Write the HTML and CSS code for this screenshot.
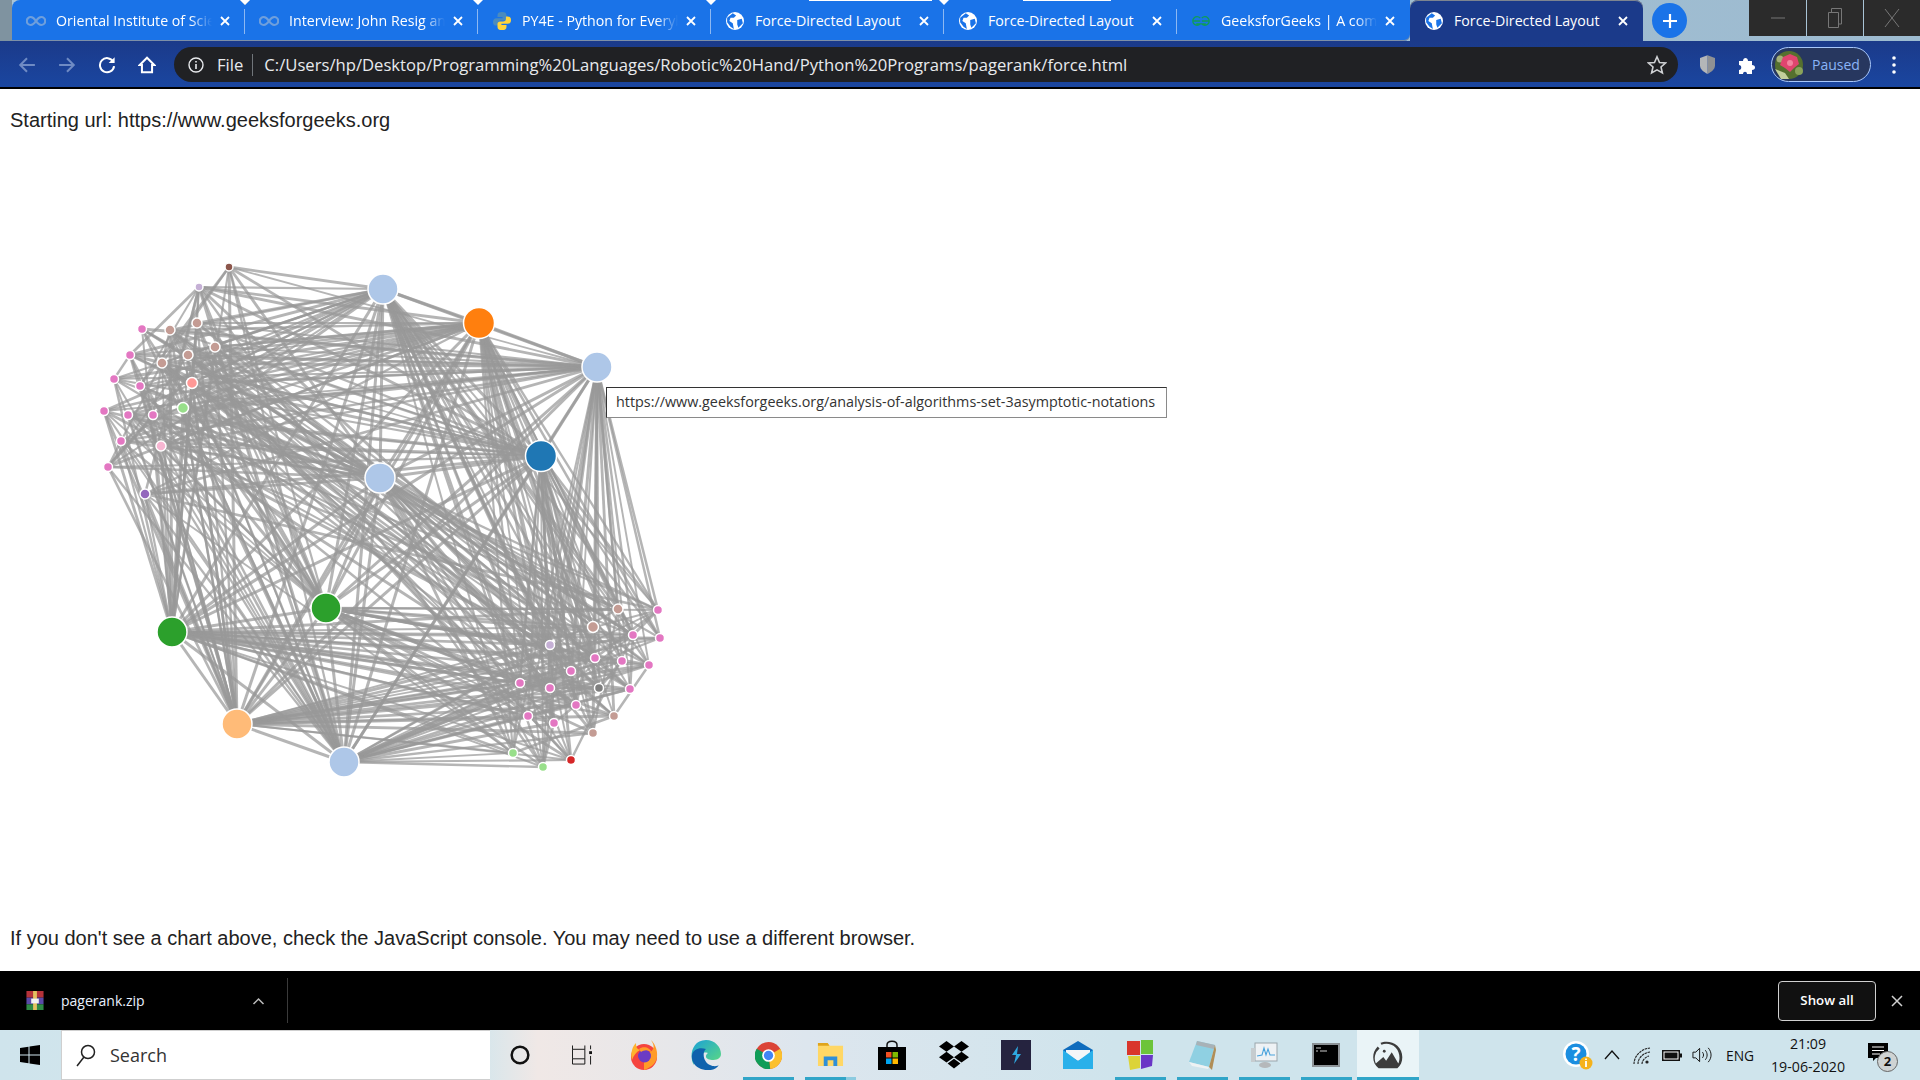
FILE: index.html
```html
<!DOCTYPE html>
<html lang="en">
<head>
    <meta charset="UTF-8">
    <title>Force-Directed Layout</title>
    <link rel="stylesheet" href="styles.css">
</head>
<body>
<svg class="defs" width="0" height="0">
    <symbol id="globe" viewBox="0 0 16 16">
        <circle cx="8" cy="8" r="8" fill="#fff"/>
        <path d="M6 1 9 3 7 5 4 5 3 8 6 10 7 15 4 13 1 9 1 5ZM10 7 14 6 15 10 11 14 10 11Z" fill="#1a73e8"/>
    </symbol>
    <symbol id="infinity" viewBox="0 0 20 10">
        <path d="M10 5C8 2 6.500 1 4.800 1A4 4 0 0 0 4.800 9C6.500 9 8 8 10 5C12 2 13.500 1 15.200 1A4 4 0 0 1 15.200 9C13.500 9 12 8 10 5Z" fill="none" stroke="#6f9fdc" stroke-width="2.200"/>
    </symbol>
    <symbol id="close" viewBox="0 0 10 10">
        <path d="M1 1 9 9M9 1 1 9" stroke="#fff" stroke-width="1.800" fill="none"/>
    </symbol>
</svg>

<header class="tabstrip">
    <div class="tab first">
        <i class="notch grey"></i>
        <svg class="favicon wide"><use href="#infinity"/></svg>
        <span class="tab-title fade">Oriental Institute of Science</span>
        <svg class="tab-close"><use href="#close"/></svg>
    </div>
    <div class="tab">
        <i class="notch"></i>
        <svg class="favicon wide"><use href="#infinity"/></svg>
        <span class="tab-title fade">Interview: John Resig and the</span>
        <svg class="tab-close"><use href="#close"/></svg>
    </div>
    <div class="tab">
        <i class="notch"></i>
        <svg class="favicon" viewBox="0 0 16 16">
            <path d="M8 0C5 0 4 1 4 3V4.500H8.500V5.500H3C1 5.500 0 7 0 9S1 12 3 12H4.500V10C4.500 8.500 5.500 7.500 7 7.500H10C11 7.500 12 6.500 12 5.500V3C12 1 11 0 8 0Z" fill="#4b8bbe"/>
            <path d="M8 16C11 16 12 15 12 13V11.500H7.500V10.500H13C15 10.500 16 9 16 7S15 4 13 4H11.500V6C11.500 7.500 10.500 8.500 9 8.500H6C5 8.500 4 9.500 4 10.500V13C4 15 5 16 8 16Z" fill="#ffd43b"/>
        </svg>
        <span class="tab-title fade">PY4E - Python for Everybody</span>
        <svg class="tab-close"><use href="#close"/></svg>
    </div>
    <div class="tab loading-a">
        <i class="notch"></i>
        <svg class="favicon"><use href="#globe"/></svg>
        <span class="tab-title">Force-Directed Layout</span>
        <svg class="tab-close"><use href="#close"/></svg>
    </div>
    <div class="tab loading-b">
        <i class="notch"></i>
        <svg class="favicon"><use href="#globe"/></svg>
        <span class="tab-title">Force-Directed Layout</span>
        <svg class="tab-close"><use href="#close"/></svg>
    </div>
    <div class="tab before-active">
        <svg class="favicon wide" viewBox="0 0 22 14">
            <path d="M10 3.500A5 5 0 1 0 10 10.500H5.500M12 3.500A5 5 0 1 1 12 10.500H16.500M1 7H10M12 7H21" fill="none" stroke="#0f9d58" stroke-width="1.500"/>
        </svg>
        <span class="tab-title fade">GeeksforGeeks | A computer</span>
        <svg class="tab-close"><use href="#close"/></svg>
    </div>
    <div class="tab active">
        <svg class="favicon"><use href="#globe"/></svg>
        <span class="tab-title">Force-Directed Layout</span>
        <svg class="tab-close"><use href="#close"/></svg>
    </div>
    <div class="new-tab">
        <svg viewBox="0 0 14 14" width="14" height="14"><path d="M7 0V14M0 7H14" stroke="#fff" stroke-width="2.200"/></svg>
    </div>
    <div class="window-controls">
        <div class="win-btn"><svg viewBox="0 0 14 14" width="14" height="14"><path d="M0 7H14" stroke="#777" stroke-width="1"/></svg></div>
        <div class="win-btn"><svg viewBox="0 0 14 20" width="14" height="20"><path d="M.5 4.500H10.500V19.500H.5ZM3.500 4.500V.5H13.500V16H10.500" fill="none" stroke="#777"/></svg></div>
        <div class="win-btn"><svg viewBox="0 0 16 20" width="16" height="20"><path d="M1 1 15 19M15 1 1 19" stroke="#777" stroke-width="1"/></svg></div>
    </div>
</header>

<nav class="toolbar">
    <svg class="tool dim" viewBox="0 0 16 16"><path d="M15 8H2M8 2 2 8 8 14" fill="none" stroke="#6f8bc4" stroke-width="1.800"/></svg>
    <svg class="tool dim" viewBox="0 0 16 16"><path d="M1 8H14M8 2 14 8 8 14" fill="none" stroke="#6f8bc4" stroke-width="1.800"/></svg>
    <svg class="tool" viewBox="0 0 16 16"><path d="M13.500 5A6.300 6.300 0 1 0 14.300 9" fill="none" stroke="#fff" stroke-width="1.800"/><path d="M14.800 1V6.300H9.500Z" fill="#fff"/></svg>
    <svg class="tool" viewBox="0 0 16 16"><path d="M8 1.500 1.500 8H3.500V14.500H12.500V8H14.500Z" fill="none" stroke="#fff" stroke-width="1.800"/></svg>
    <div class="omnibox">
        <svg class="info" viewBox="0 0 16 16"><circle cx="8" cy="8" r="7" fill="none" stroke="#e8eaed" stroke-width="1.400"/><path d="M8 7V12M8 4V5.600" stroke="#e8eaed" stroke-width="1.600"/></svg>
        <span class="scheme">File</span>
        <span class="url">C:/Users/hp/Desktop/Programming%20Languages/Robotic%20Hand/Python%20Programs/pagerank/force.html</span>
        <svg class="star" viewBox="0 0 20 20"><path d="M10 1.800 12.500 7.500 18.500 8 14 12 15.400 18 10 14.900 4.600 18 6 12 1.500 8 7.500 7.500Z" fill="none" stroke="#cfd1d4" stroke-width="1.600"/></svg>
    </div>
    <svg class="ext shield" viewBox="0 0 16 20"><path d="M8 0 16 3V11C16 15 12 18 8 20Z" fill="#8f9194"/><path d="M8 0 0 3V11C0 15 4 18 8 20Z" fill="#b4b6b8"/></svg>
    <svg class="ext puzzle" viewBox="0 0 18 18"><path d="M1 5H5C5 1 10 1 10 5H14V9C18 9 18 14 14 14V18H9C9 15 5 15 5 18H1V14C4 14 4 9 1 9Z" fill="#fff"/></svg>
    <div class="profile">
        <svg class="avatar" viewBox="0 0 28 28">
            <circle cx="14" cy="14" r="14" fill="#55702e"/>
            <path d="M0 18 10 22 14 28H6Z" fill="#c3cf9c"/>
            <circle cx="24" cy="20" r="4" fill="#8aa35a"/>
            <circle cx="5" cy="8" r="3.500" fill="#a5b07a"/>
            <path d="M15 3 22 6 24 13 19 17 15 21 10 17 5 14 8 6Z" fill="#e0456f"/>
            <circle cx="15" cy="12" r="3" fill="#f2849f"/>
        </svg>
        <span>Paused</span>
    </div>
    <svg class="kebab" viewBox="0 0 4 18"><circle cx="2" cy="2" r="1.800" fill="#fff"/><circle cx="2" cy="9" r="1.800" fill="#fff"/><circle cx="2" cy="16" r="1.800" fill="#fff"/></svg>
</nav>

<main class="page">
    <p class="start-url">Starting url: https://www.geeksforgeeks.org</p>
    <div class="chart">
        <svg id="graph" width="960" height="760" viewBox="0 150 960 760"></svg>
        <div class="tip">https://www.geeksforgeeks.org/analysis-of-algorithms-set-3asymptotic-notations</div>
    </div>
    <p class="hint">If you don't see a chart above, check the JavaScript console. You may need to use a different browser.</p>
</main>

<section class="shelf">
    <div class="download">
        <svg class="rar" viewBox="0 0 20 20">
            <rect x="1" y="0" width="18" height="7" fill="#b5323a"/>
            <rect x="1" y="7" width="18" height="7" fill="#5a4aa8"/>
            <rect x="1" y="14" width="18" height="6" fill="#2f8a46"/>
            <rect x="8" y="0" width="4" height="20" fill="#e3c060"/>
            <rect x="6" y="8" width="8" height="5" fill="#f2f2f2"/>
        </svg>
        <span class="file-name">pagerank.zip</span>
        <svg class="caret" viewBox="0 0 12 8"><path d="M1 7 6 2 11 7" fill="none" stroke="#bbb" stroke-width="1.500"/></svg>
    </div>
    <button class="show-all">Show all</button>
    <svg class="shelf-close" viewBox="0 0 12 12"><path d="M1 1 11 11M11 1 1 11" stroke="#d0d0d0" stroke-width="1.500"/></svg>
</section>

<footer class="taskbar">
    <svg class="start" viewBox="0 0 20 20"><path d="M0 3 8.500 1.800V9.500H0ZM9.500 1.600 20 0V9.500H9.500ZM0 10.500H8.500V18.200L0 17ZM9.500 10.500H20V20L9.500 18.400Z" fill="#000"/></svg>
    <div class="search">
        <svg viewBox="0 0 20 24" width="20" height="24"><circle cx="12" cy="9" r="6.500" fill="none" stroke="#222" stroke-width="1.500"/><path d="M8 14 1 23" stroke="#222" stroke-width="1.500"/></svg>
        <span>Search</span>
    </div>
    <div class="apps">
        <div class="app"><svg class="size-20" viewBox="0 0 24 24"><circle cx="12" cy="12" r="10" fill="none" stroke="#111" stroke-width="3"/></svg></div>
        <div class="app"><svg class="size-20" viewBox="0 0 21 20"><path d="M.5 0V4H13.500V0M.5 4V14H13.500V4M.5 14V19.500H13.500V14M19.500 0V4M19.500 11V20" fill="none" stroke="#111"/><rect x="18" y="6" width="3" height="3" fill="#111"/></svg></div>
        <div class="app"><svg viewBox="0 0 28 30">
            <circle cx="14" cy="17" r="13" fill="#f5443f"/>
            <path d="M14 17C24 10 26 8 21 0 24 3 28 9 27 17 26 24 20 28 14 30Z" fill="#ff9b28"/>
            <path d="M2 20C0 12 3 6 6 3 6 7 7 9 10 10 6 12 4 15 2 20Z" fill="#ffb32d"/>
            <circle cx="14.500" cy="16" r="6.500" fill="#6b3bc4"/>
            <path d="M9 9C13 6 20 7 22 13 18 9 14 10 11 12Z" fill="#ff9b28"/>
        </svg></div>
        <div class="app"><svg viewBox="0 0 30 30">
            <defs><linearGradient id="edgeTop" x1="0" y1="0" x2="1" y2="1"><stop offset="0" stop-color="#1aa0d8"/><stop offset="1" stop-color="#5fdc7e"/></linearGradient></defs>
            <path d="M15 0C24 0 30 7 30 14 30 19 25 20 21 20 15 20 13 16 17 13 9 11 2 16 3 25 -2 18 0 0 15 0Z" fill="url(#edgeTop)"/>
            <path d="M1 15C2 9 9 7 15 9 11 12 12 22 19 25 23 27 27 26 28 25 24 31 16 31 10 29 4 27 0 21 1 15Z" fill="#0f62ad"/>
        </svg></div>
        <div class="app running"><svg class="size-27" viewBox="0 0 32 32"><circle cx="16" cy="16" r="16" fill="#db4437"/><path d="M16 16 30 8A16 16 0 0 1 18 32Z" fill="#fbc02d"/><path d="M16 16 18 32A16 16 0 0 1 2 8Z" fill="#0f9d58"/><circle cx="16" cy="16" r="7.500" fill="#fff"/><circle cx="16" cy="16" r="5.500" fill="#4285f4"/></svg></div>
        <div class="app running stacked"><svg class="size-27" viewBox="0 0 28 26"><path d="M1 0H11L13 3H27V24H1Z" fill="#ffd765"/><path d="M1 0H11L13 3H1Z" fill="#dfa41c"/><path d="M7 24V14H21V24H17V18H11V24Z" fill="#2f8fd8"/></svg></div>
        <div class="app"><svg viewBox="0 0 28 30"><path d="M9 8V5C9 0 19 0 19 5V8" fill="none" stroke="#111" stroke-width="1.500"/><rect x="0" y="7" width="28" height="23" fill="#000"/><rect x="8" y="12" width="5.500" height="5.500" fill="#f25022"/><rect x="14.500" y="12" width="5.500" height="5.500" fill="#7fba00"/><rect x="8" y="18.500" width="5.500" height="5.500" fill="#00a4ef"/><rect x="14.500" y="18.500" width="5.500" height="5.500" fill="#ffb900"/></svg></div>
        <div class="app"><svg viewBox="0 0 28 26"><path d="M7 0 14 5 7 10 0 5ZM21 0 28 5 21 10 14 5ZM7 10 14 15 7 20 0 15ZM21 10 28 15 21 20 14 15ZM14 16.500 20 21 14 25.500 8 21Z" fill="#000"/></svg></div>
        <div class="app"><svg viewBox="0 0 30 30"><rect width="30" height="30" fill="#25233f"/><path d="M17 6 11 15H15L13 24 20 14H16Z" fill="#2ea8e0"/></svg></div>
        <div class="app"><svg viewBox="0 0 30 28"><path d="M15 0 30 9V28H0V9Z" fill="#0f6cbd"/><path d="M3 9H27V13L15 20 3 13Z" fill="#f3f6f8"/><path d="M0 9 15 20 30 9V28H0Z" fill="#29b0ea"/></svg></div>
        <div class="app running"><svg viewBox="0 0 28 30">
            <rect x="1" y="1" width="13" height="14" fill="#d9362c"/>
            <rect x="15" y="0" width="12" height="14" fill="#6cc43a"/>
            <path d="M2 16H14V28L4 30Z" fill="#dcd338"/>
            <path d="M15 15H27L26 26 15 29Z" fill="#6a36c6"/>
        </svg></div>
        <div class="app running"><svg viewBox="0 0 28 30"><path d="M9 1 27 5 21 27 1 22Z" fill="#8fd0e2"/><path d="M9 1 27 5 26 9 8 5Z" fill="#a8b2b7"/><path d="M27 5 28 10 24 30 21 27Z" fill="#b08e57"/><path d="M1 22 21 27 20 29 4 26Z" fill="#eef2f3"/></svg></div>
        <div class="app running"><svg viewBox="0 0 28 30"><rect x="5" y="3" width="22" height="18" fill="#eef2f5" stroke="#9aa5ab"/><path d="M7 16 12 15 14 8 16 15 18 9 20 15H25" fill="none" stroke="#4aa3dd" stroke-width="1.100"/><rect x="1" y="8" width="4" height="14" fill="#c6cccf"/><ellipse cx="15" cy="25" rx="6" ry="3" fill="#b5b8ba"/></svg></div>
        <div class="app running"><svg class="size-28" viewBox="0 0 28 24"><rect x="1" y="1" width="26" height="22" fill="#000" stroke="#8c9296" stroke-width="2"/><path d="M4 5H9M4 8H6M8 8H15" stroke="#ccc" stroke-width="1"/></svg></div>
        <div class="app running current"><svg viewBox="0 0 32 30">
            <path d="M3 24A13.500 13.500 0 0 1 7 8L5 6C-2 13 -1 24 6 29H26C33 24 33 11 26 5 21 0 12 0 8 2L9 4C14 2 20 3 24 7 29 12 29 20 27 24L20 12 14 21 11 17Z" fill="#3c3c3c"/>
            <circle cx="12" cy="11" r="1.500" fill="#3c3c3c"/>
        </svg></div>
    </div>
    <div class="tray">
        <svg class="help" viewBox="0 0 30 30"><circle cx="13" cy="13" r="13" fill="#fff"/><circle cx="13" cy="13" r="10.500" fill="#1b8ee0"/><text x="13" y="20" class="help-mark">?</text><circle cx="23" cy="22" r="6.500" fill="#f5b21b"/><path d="M23 20V26M23 17.500V19" stroke="#fff" stroke-width="1.800"/></svg>
        <svg class="chevron" viewBox="0 0 16 10"><path d="M1 9 8 1 15 9" fill="none" stroke="#111" stroke-width="1.300"/></svg>
        <svg class="wifi" viewBox="0 0 20 18"><path d="M1 17C1 9 8 2 17 1M5 17C5 11 10 6 17 5M9 17C9 14 12 10 16 9" fill="none" stroke="#222" stroke-width="1.100" stroke-dasharray="2.500 .7"/><circle cx="14" cy="15" r="1.600" fill="#222"/></svg>
        <svg class="battery" viewBox="0 0 20 11"><rect x=".75" y=".75" width="16.500" height="9.500" fill="#fff" stroke="#111" stroke-width="1.500"/><rect x="2.500" y="2.500" width="13" height="6" fill="#111"/><rect x="18" y="3.500" width="2" height="4" fill="#111"/></svg>
        <svg class="speaker" viewBox="0 0 21 16"><path d="M1 5H4L8 1V15L4 11H1Z" fill="none" stroke="#111"/><path d="M11 5C12.500 7 12.500 9 11 11M14 3C16.500 6 16.500 10 14 13M17 .5C21 5 21 11 17 15.500" fill="none" stroke="#111"/></svg>
        <span class="lang">ENG</span>
        <div class="clock"><span>21:09</span><span>19-06-2020</span></div>
        <div class="notify">
            <svg viewBox="0 0 20 18" width="20" height="18"><path d="M0 0H20V15H8L5 18V15H0Z" fill="#000"/><path d="M4 4H16M4 7.500H16M4 11H12" stroke="#fff"/></svg>
            <span class="badge">2</span>
        </div>
    </div>
</footer>

<script src="graph.js"></script>
</body>
</html>
```

FILE: styles.css
```css
* {
    box-sizing: border-box;
}

html,
body {
    margin: 0;
    height: 100%;
    overflow: hidden;
}

body {
    display: flex;
    flex-direction: column;
    height: 1080px;
    background: #fff;
    font-family: "Open Sans", "Noto Sans", sans-serif;
}

.defs {
    position: absolute;
}

/* tab strip */
.tabstrip {
    display: flex;
    align-items: stretch;
    height: 41px;
    padding-left: 12px;
    background: linear-gradient(90deg, #7f93a0 0, #7f93a0 12px, #a9c4d6 12px, #9dbbd0 100%);
    color: #fff;
}

.tab {
    position: relative;
    display: flex;
    align-items: center;
    flex: none;
    width: 233px;
    padding: 0 15px 0 15px;
    background: #1a73e8;
    box-shadow: inset 0 -1px 0 #7d8fa8;
    font-size: 14.2px;
}

/* separator between tabs */
.tab::after {
    content: "";
    position: absolute;
    right: 0;
    top: 9px;
    height: 25px;
    border-right: 1px solid #8db8f2;
}

.tab.first {
    border-top-left-radius: 8px;
}

.tab.before-active {
    border-bottom-right-radius: 6px;
}

.tab.before-active::after,
.tab.active::after {
    display: none;
}

.tab.active {
    background: #1b3a8a;
    border-radius: 8px 8px 0 0;
    box-shadow: inset 0 1px 0 #7d8490;
}

.tab.loading-a::before,
.tab.loading-b::before {
    content: "";
    position: absolute;
    top: 0;
    height: 1px;
    background: #fff;
}

.tab.loading-a::before {
    left: 98px;
    width: 123px;
}

.tab.loading-b::before {
    left: 79px;
    width: 88px;
}

.notch {
    position: absolute;
    left: -5px;
    top: 0;
    z-index: 1;
    border-top: 5px solid #fff;
    border-left: 5px solid transparent;
    border-right: 5px solid transparent;
}

.notch.grey {
    left: 228px;
    border-top-color: #7f93a0;
}

.favicon {
    flex: none;
    width: 18px;
    height: 18px;
    margin-right: 11px;
}

.favicon.wide {
    width: 20px;
    height: 12px;
    margin: 0 10px 0 -1px;
}

.tab-title {
    flex: 1;
    overflow: hidden;
    white-space: nowrap;
}

.tab-title.fade {
    -webkit-mask-image: linear-gradient(90deg, #000 86%, transparent 100%);
    mask-image: linear-gradient(90deg, #000 86%, transparent 100%);
}

.tab-close {
    flex: none;
    width: 10px;
    height: 10px;
    margin-left: 8px;
}

.new-tab {
    display: flex;
    align-items: center;
    justify-content: center;
    flex: none;
    width: 35px;
    height: 35px;
    margin: 3px 0 0 9px;
    border-radius: 50%;
    background: #1a73e8;
}

.window-controls {
    display: flex;
    height: 36px;
    margin-left: auto;
    background: #2b2b2b;
}

.win-btn {
    display: flex;
    align-items: center;
    justify-content: center;
    width: 57px;
    border-left: 1px solid #a9c4d6;
}

.win-btn:first-child {
    border-left: 0;
}

/* toolbar */
.toolbar {
    display: flex;
    align-items: center;
    flex: none;
    height: 48px;
    padding: 1px 0 0 18px;
    background: linear-gradient(180deg, #1b3a8a, #1a46a0);
    border-bottom: 2px solid #000;
}

.tool {
    flex: none;
    width: 18px;
    height: 18px;
    margin-right: 22px;
}

.omnibox {
    display: flex;
    align-items: center;
    flex: none;
    width: 1504px;
    height: 35px;
    margin-left: -4px;
    padding: 0 11px 0 14px;
    background: #202124;
    border-radius: 18px;
    color: #e8eaed;
    font-size: 16.65px;
}

.info {
    flex: none;
    width: 16px;
    height: 16px;
    margin-right: 13px;
}

.scheme {
    padding-right: 9px;
    margin-right: 11px;
    border-right: 1px solid #70757a;
    line-height: 22px;
}

.url {
    flex: 1;
    white-space: nowrap;
}

.star {
    flex: none;
    width: 20px;
    height: 20px;
}

.ext {
    flex: none;
}

.shield {
    width: 15px;
    height: 19px;
    margin-left: 22px;
}

.puzzle {
    width: 18px;
    height: 18px;
    margin-left: 23px;
}

.profile {
    display: flex;
    align-items: center;
    flex: none;
    width: 100px;
    height: 35px;
    margin-left: 15px;
    padding-left: 3px;
    background: #27375f;
    border: 1px solid #a8c7fa;
    border-radius: 18px;
    color: #8ab4f8;
    font-size: 14px;
}

.avatar {
    width: 28px;
    height: 28px;
    margin-right: 9px;
}

.kebab {
    flex: none;
    width: 4px;
    height: 18px;
    margin-left: 21px;
}

/* page */
.page {
    flex: 1;
    display: flex;
    flex-direction: column;
    min-height: 0;
    padding: 0 10px;
    color: #222;
    font-family: "Liberation Sans", Arial, sans-serif;
    font-size: 20px;
}

.start-url {
    margin: 19px 0 0;
    line-height: 24px;
}

.chart {
    position: relative;
    flex: 1;
    margin-left: -10px;
}

#graph {
    display: block;
    margin-top: 18px;
}

.link {
    stroke: #999;
    stroke-opacity: 0.72;
}

.node {
    stroke: #fff;
    stroke-width: 1.5px;
}

.tip {
    position: absolute;
    left: 606px;
    top: 255px;
    width: 561px;
    height: 31px;
    padding-left: 9px;
    background: #fff;
    border: 1px solid #333;
    border-right-color: #8a8a8a;
    border-bottom-color: #8a8a8a;
    color: #333;
    font-family: "Open Sans", sans-serif;
    font-size: 14.35px;
    line-height: 28px;
    white-space: nowrap;
}

.hint {
    margin: 0 0 21px;
    line-height: 24px;
}

/* download shelf */
.shelf {
    display: flex;
    align-items: center;
    flex: none;
    height: 59px;
    padding-right: 17px;
    background: #000;
    color: #fff;
}

.download {
    display: flex;
    align-items: center;
    width: 288px;
    height: 45px;
    padding-left: 25px;
    border-right: 1px solid #3a3a3a;
}

.rar {
    width: 20px;
    height: 19px;
    margin-right: 16px;
}

.file-name {
    flex: 1;
    color: #e8f0fe;
    font-size: 14px;
}

.caret {
    width: 13px;
    height: 8px;
    margin-right: 22px;
}

.show-all {
    width: 98px;
    height: 40px;
    margin-left: auto;
    padding-bottom: 2px;
    background: #111;
    border: 1px solid #d0d0d0;
    border-radius: 4px;
    color: #fff;
    font-family: "Open Sans", sans-serif;
    font-size: 13.3px;
    font-weight: 600;
}

.shelf-close {
    width: 12px;
    height: 12px;
    margin-left: 15px;
}

/* windows taskbar */
.taskbar {
    display: flex;
    align-items: stretch;
    flex: none;
    height: 50px;
    background: linear-gradient(90deg, #cfe4ec 0, #d5e6ec 25%, #f0e8e6 28%, #dde6ee 42%, #cfe4ec 58%, #cfe4ec 100%);
}

.start {
    align-self: center;
    width: 20px;
    height: 20px;
    margin: 0 21px 0 20px;
}

.search {
    display: flex;
    align-items: center;
    flex: none;
    width: 429px;
    padding-left: 14px;
    background: #fff;
    border: 1px solid #cfcfcf;
    border-right: 0;
    color: #333;
    font-size: 18px;
}

.search span {
    margin-left: 14px;
}

.apps {
    display: flex;
    flex: none;
    margin-left: -1px;
}

.app {
    position: relative;
    display: flex;
    align-items: center;
    justify-content: center;
    flex: none;
    width: 62px;
}

.app svg {
    width: 30px;
    height: 30px;
}

.app svg.size-20 {
    width: 20px;
    height: 20px;
}

.app svg.size-27 {
    width: 27px;
    height: 27px;
}

.app svg.size-28 {
    width: 28px;
    height: 24px;
}

.app.running::after {
    content: "";
    position: absolute;
    left: 6px;
    right: 5px;
    bottom: 0;
    height: 3px;
    background: #31a5c8;
}

.app.stacked::after {
    background: linear-gradient(90deg, #31a5c8 80%, #8ccbe0 80%);
}

.app.current {
    background: #eaf4f7;
}

.app.current::after {
    left: 0;
    right: 0;
}

.tray {
    display: flex;
    align-items: center;
    flex: 1;
    padding-left: 144px;
    color: #111;
}

.help {
    flex: none;
    width: 30px;
    height: 30px;
    margin: 2px 11px 0 0;
}

.help-mark {
    fill: #fff;
    font-family: "Open Sans", sans-serif;
    font-size: 19px;
    font-weight: 700;
    text-anchor: middle;
}

.chevron {
    flex: none;
    width: 16px;
    height: 10px;
    margin: 0 13px 0 0;
}

.wifi {
    flex: none;
    width: 20px;
    height: 18px;
    margin: 2px 9px 0 0;
}

.battery {
    flex: none;
    width: 20px;
    height: 11px;
    margin: 1px 10px 0 0;
}

.speaker {
    flex: none;
    width: 20px;
    height: 16px;
    margin-right: 14px;
}

.lang {
    flex: none;
    width: 28px;
    margin-right: 16px;
    font-size: 13.8px;
    white-space: nowrap;
}

.clock {
    display: flex;
    flex-direction: column;
    align-items: center;
    flex: none;
    width: 76px;
    gap: 5px;
    margin-right: 22px;
    font-size: 14.2px;
    line-height: 18px;
    white-space: nowrap;
}

.notify {
    position: relative;
    flex: none;
    width: 20px;
    height: 18px;
    margin-top: -6px;
}

.notify svg {
    display: block;
}

.badge {
    position: absolute;
    left: 9px;
    top: 8px;
    width: 21px;
    height: 21px;
    background: #cfd3d3;
    border: 1px solid #666;
    border-radius: 50%;
    font-size: 13px;
    font-weight: 700;
    line-height: 19px;
    text-align: center;
}
```

FILE: graph.js
```js
// d3 category20 colours used by the chart
var hubs = [
    [383, 289, "#aec7e8", 15], [479, 323, "#ff7f0e", 15.5], [597, 367, "#aec7e8", 15],
    [541, 456, "#1f77b4", 15.5], [380, 478, "#aec7e8", 15], [326, 608, "#2ca02c", 15],
    [172, 632, "#2ca02c", 15], [237, 724, "#ffbb78", 15], [344, 762, "#aec7e8", 15]
];

var leftNodes = [
    [229, 267, "#8c564b", 4], [199, 287, "#c5b0d5", 4], [142, 329, "#e377c2", 4.5],
    [170, 330, "#c49c94", 5], [197, 323, "#c49c94", 5], [215, 347, "#c49c94", 5],
    [188, 355, "#c49c94", 5], [162, 363, "#c49c94", 5], [130, 355, "#e377c2", 4.5],
    [114, 379, "#e377c2", 4.5], [140, 386, "#e377c2", 4.5], [192, 383, "#ff9896", 5.500],
    [183, 408, "#98df8a", 5.500], [104, 411, "#e377c2", 4.5], [128, 415, "#e377c2", 4.5],
    [153, 415, "#e377c2", 4.5], [121, 441, "#e377c2", 4.5], [161, 446, "#f7b6d2", 5],
    [108, 467, "#e377c2", 4.5], [145, 494, "#9467bd", 5]
];

var rightNodes = [
    [618, 609, "#c49c94", 5], [658, 610, "#e377c2", 4.5], [593, 627, "#c49c94", 5.500],
    [633, 635, "#e377c2", 4.5], [660, 638, "#e377c2", 4.5], [550, 645, "#c5b0d5", 4.5],
    [595, 658, "#e377c2", 4.5], [622, 661, "#e377c2", 4.5], [649, 665, "#e377c2", 4.5],
    [571, 671, "#e377c2", 4.5], [520, 683, "#e377c2", 4.5], [550, 688, "#e377c2", 4.5],
    [599, 688, "#7f7f7f", 4.5], [630, 689, "#e377c2", 4.5], [576, 705, "#e377c2", 4.5],
    [614, 716, "#c49c94", 4.5], [528, 716, "#e377c2", 4.5], [554, 723, "#e377c2", 4.5],
    [593, 733, "#c49c94", 4.5], [513, 753, "#98df8a", 4.5], [543, 767, "#98df8a", 4.5],
    [571, 760, "#d62728", 4.5]
];

var seed = 12345;
function rand() {
    seed = (seed * 16807) % 2147483647;
    return seed / 2147483647;
}

var svg = document.getElementById("graph");
var ns = "http://www.w3.org/2000/svg";

function addLink(a, b, width) {
    var line = document.createElementNS(ns, "line");
    line.setAttribute("class", "link");
    line.setAttribute("x1", a[0]);
    line.setAttribute("y1", a[1]);
    line.setAttribute("x2", b[0]);
    line.setAttribute("y2", b[1]);
    line.setAttribute("stroke-width", width);
    svg.appendChild(line);
}

function addNode(n) {
    var dot = document.createElementNS(ns, "circle");
    dot.setAttribute("class", "node");
    dot.setAttribute("cx", n[0]);
    dot.setAttribute("cy", n[1]);
    dot.setAttribute("r", n[3]);
    dot.setAttribute("fill", n[2]);
    svg.appendChild(dot);
}

function linkWidth() {
    return 1.8 + rand() * 1.2;
}

var smalls = leftNodes.concat(rightNodes);
var i, j;

for (i = 0; i < hubs.length; i++) {
    for (j = i + 1; j < hubs.length; j++) {
        addLink(hubs[i], hubs[j], 3);
    }
}

// nearly every page links to the site's main pages
smalls.forEach(function (s) {
    hubs.forEach(function (h) {
        if (rand() < 0.85) {
            addLink(s, h, linkWidth());
        }
    });
});

// pages in one cluster link to each other now and then
function linkCluster(list, chance) {
    for (i = 0; i < list.length; i++) {
        for (j = i + 1; j < list.length; j++) {
            if (rand() < chance) {
                addLink(list[i], list[j], linkWidth());
            }
        }
    }
}
linkCluster(leftNodes, 0.1);
linkCluster(rightNodes, 0.1);

// a few links run across the chart between the two clusters
leftNodes.forEach(function (a) {
    rightNodes.forEach(function (b) {
        if (rand() < 0.07) {
            addLink(a, b, linkWidth());
        }
    });
});

hubs.forEach(addNode);
smalls.forEach(addNode);
```
